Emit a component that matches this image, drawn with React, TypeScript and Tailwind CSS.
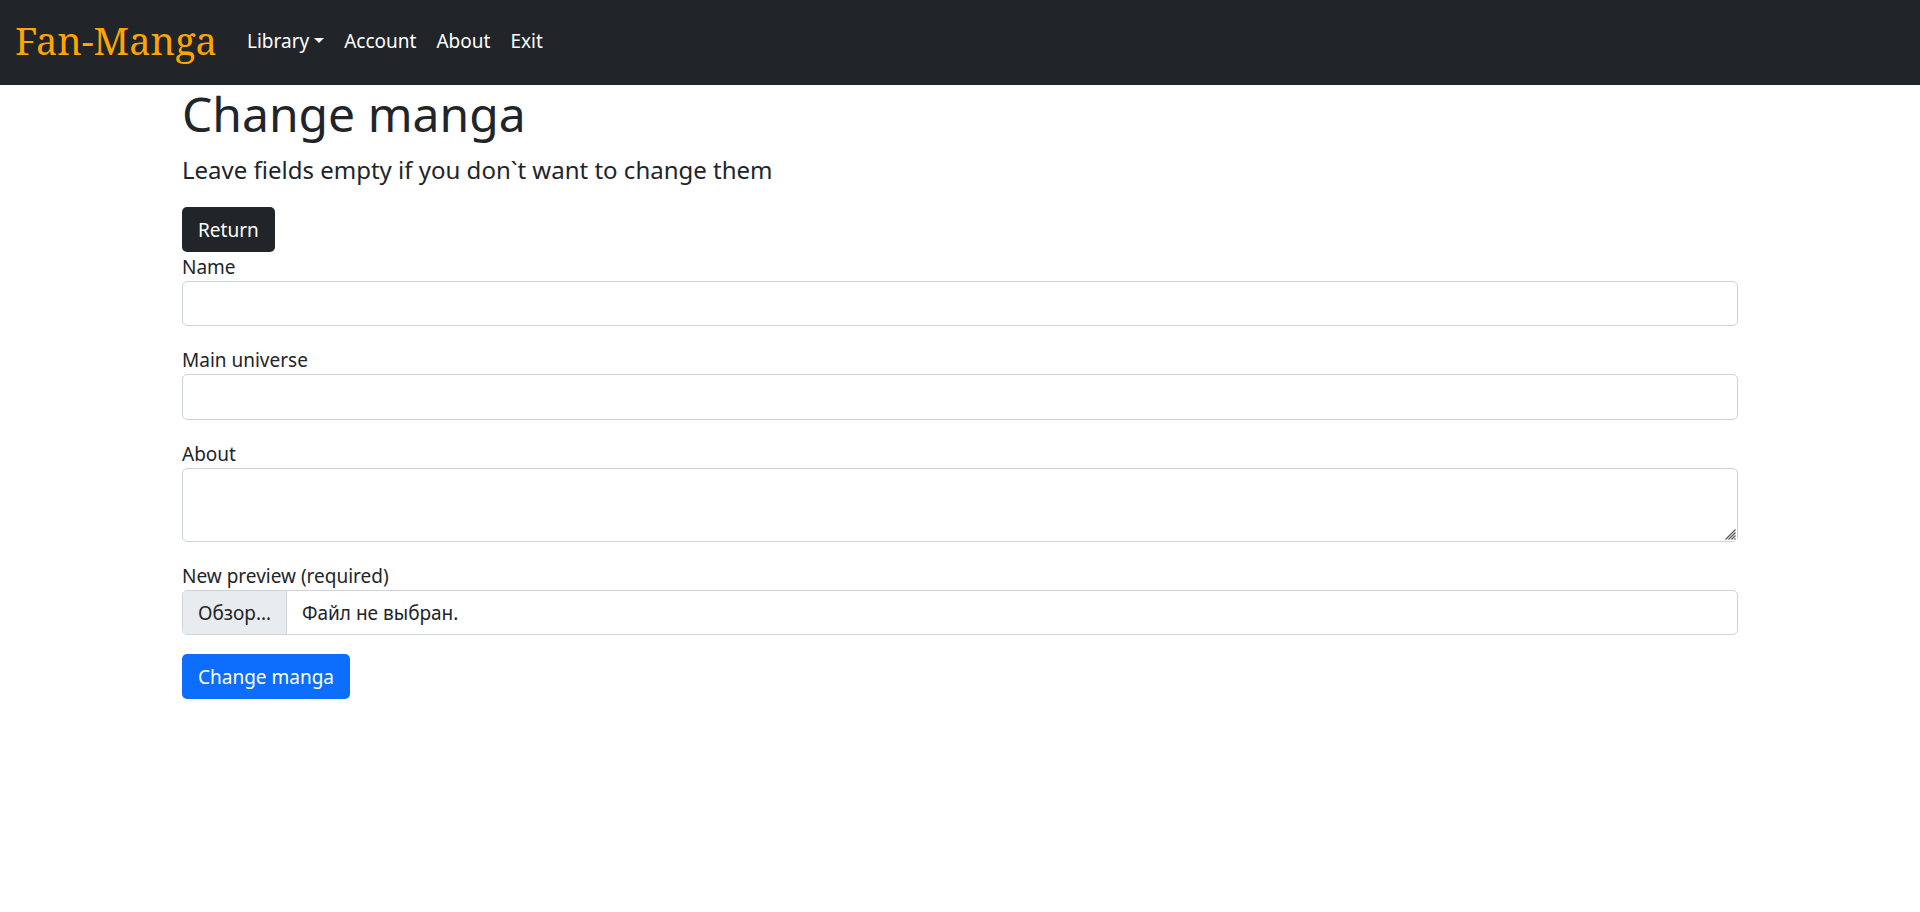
import { useId, useState } from "react";
import type { ReactNode } from "react";

const control =
  "block w-full rounded-[5px] border border-[#ced4da] bg-white px-[14px] outline-none focus:border-[#86b7fe]";
const button = "flex h-[45px] w-fit items-center rounded-[5px] px-[16px] pt-[2px] text-white";
const navLink = "px-[10px] py-2 text-white";

function Field({ id, label, children }: { id: string; label: string; children: ReactNode }) {
  return (
    <div className="mb-[19px]">
      <label htmlFor={id} className="block h-[29px] w-fit leading-[31px]">
        {label}
      </label>
      {children}
    </div>
  );
}

function Navbar() {
  return (
    <header className="flex h-[85px] items-center bg-[#212529] px-[15px] pb-[2px]">
      <a
        href="#"
        className="mr-[20px] pb-[3px] font-['Noto_Serif','DejaVu_Serif_Condensed','DejaVu_Serif',serif] text-[38px] leading-[58px] text-[#ffa500]"
      >
        Fan-Manga
      </a>
      <nav className="flex items-center">
        <button type="button" aria-haspopup="menu" className={`${navLink} flex items-center gap-[5px]`}>
          Library
          <svg width="10" height="7" viewBox="0 0 10 7" fill="currentColor" aria-hidden="true">
            <path d="M0 0h10L5 5z" />
          </svg>
        </button>
        <a href="#account" className={navLink}>
          Account
        </a>
        <a href="#about" className={navLink}>
          About
        </a>
        <a href="#exit" className={navLink}>
          Exit
        </a>
      </nav>
    </header>
  );
}

export default function App() {
  const base = useId();
  const [fileName, setFileName] = useState("Файл не выбран.");

  return (
    <div className="min-h-screen bg-white font-['Noto_Sans',sans-serif] text-[19px] leading-[29px] text-[#212529]">
      <Navbar />
      <main className="mx-auto max-w-[1584px] px-[14px]">
        <h1 className="mb-[9px] text-[48px] leading-[58px]">Change manga</h1>
        <p className="mb-[19px] text-[24px] leading-[36px]">
          Leave fields empty if you don`t want to change them
        </p>
        <a href="#return" className={`${button} bg-[#212529]`}>
          Return
        </a>
        <form onSubmit={(e) => e.preventDefault()}>
          <Field id={`${base}-name`} label="Name">
            <input id={`${base}-name`} type="text" className={`${control} h-[45px]`} />
          </Field>
          <Field id={`${base}-universe`} label="Main universe">
            <input id={`${base}-universe`} type="text" className={`${control} h-[46px]`} />
          </Field>
          <Field id={`${base}-about`} label="About">
            <div className="relative">
              <textarea id={`${base}-about`} className={`${control} h-[74px] resize-y py-[7px]`} />
              <svg
                width="12"
                height="12"
                viewBox="0 0 12 12"
                className="pointer-events-none absolute right-px bottom-px bg-white"
                aria-hidden="true"
              >
                <path
                  d="M0.5 10.5L10.5 0.5M3.5 10.5L10.5 3.5M6.5 10.5L10.5 6.5M9.5 10.5L10.5 9.5"
                  stroke="#555"
                  strokeWidth="1.2"
                  fill="none"
                />
              </svg>
            </div>
          </Field>
          <Field id={`${base}-preview`} label="New preview (required)">
            <label className="relative flex h-[45px] w-full overflow-hidden rounded-[5px] border border-[#ced4da] bg-white">
              <input
                id={`${base}-preview`}
                type="file"
                className="sr-only"
                onChange={(e) => setFileName(e.target.files?.[0]?.name ?? "Файл не выбран.")}
              />
              <span className="flex items-center border-r border-[#ced4da] bg-[#e9ecef] px-[15px] pt-[2px]">
                Обзор…
              </span>
              <span className="flex items-center px-[15px] pt-[2px]">{fileName}</span>
            </label>
          </Field>
          <button type="submit" className={`${button} bg-[#0d6efd]`}>
            Change manga
          </button>
        </form>
      </main>
    </div>
  );
}
